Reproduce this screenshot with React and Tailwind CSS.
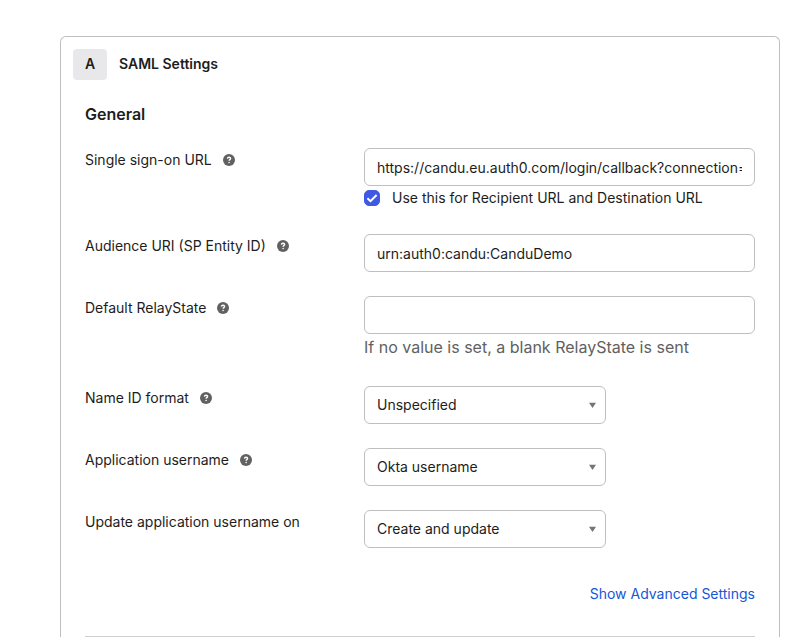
import React, { useState } from 'react';

const usernameFormats = ['Okta username', 'Email', 'Custom', '(None)'];
const nameIdFormats = ['Unspecified', 'EmailAddress', 'x509SubjectName', 'Persistent', 'Transient'];
const updateOptions = ['Create and update', 'Create only'];

// Small round help marker shown after a label
const HelpIcon = () => (
  <svg className="w-3 h-3 ml-[11px] shrink-0" viewBox="0 0 12 12" aria-hidden="true">
    <circle cx="6" cy="6" r="6" fill="#616161" />
    <path
      d="M4.4 4.6c.1-.9.7-1.3 1.6-1.3s1.6.5 1.6 1.3c0 1-1.5 1-1.5 2.2"
      fill="none"
      stroke="#fff"
      strokeWidth="1.4"
    />
    <circle cx="6.1" cy="8.5" r="0.8" fill="#fff" />
  </svg>
);

// One label / control row of the form
const Field = ({ id, label, help, children }) => (
  <div className="flex mb-6">
    <div className="w-[279px] shrink-0 pt-0.5">
      <label htmlFor={id} className="flex items-center leading-5">
        {label}
        {help && <HelpIcon />}
      </label>
    </div>
    <div className="flex-1 min-w-0">{children}</div>
  </div>
);

const TextInput = ({ id, defaultValue }) => (
  <input
    id={id}
    type="text"
    defaultValue={defaultValue}
    className="block w-full h-[38px] px-3 border border-[#bfbfbf] rounded-md bg-white
             focus:outline-none focus:border-[#3f59e4]"
  />
);

const Select = ({ id, options }) => (
  <div className="relative w-[242px]">
    <select
      id={id}
      className="block w-full h-[38px] pl-3 pr-8 appearance-none border border-[#bfbfbf] rounded-md bg-white
               focus:outline-none focus:border-[#3f59e4]"
    >
      {options.map((option) => (
        <option key={option}>{option}</option>
      ))}
    </select>
    <svg
      className="absolute right-2.5 top-4 w-[7px] h-1.5 pointer-events-none"
      viewBox="0 0 7 6"
      aria-hidden="true"
    >
      <path d="M0 .8h7L3.5 6z" fill="#757575" />
    </svg>
  </div>
);

const App = () => {
  const [useForRecipient, setUseForRecipient] = useState(true);

  return (
    <div className="min-h-screen flex flex-col bg-white pt-9 pl-[60px] pr-[23px] font-['Inter',sans-serif] text-sm text-[#1d1d21]">
      <section className="flex-1 border border-b-0 border-[#bfbfbf] rounded-t-md">
        {/* Step header */}
        <header className="flex items-start px-3 pt-3 leading-[29px] font-semibold">
          <span className="w-[34px] h-[31px] rounded bg-[#e8e8ea] text-center">A</span>
          <h1 className="ml-3">SAML Settings</h1>
        </header>

        <form className="px-6 pt-[22px]" onSubmit={(e) => e.preventDefault()}>
          <h2 className="mb-[22px] text-base leading-6 font-semibold">General</h2>

          <Field id="sso-url" label="Single sign-on URL" help>
            <TextInput
              id="sso-url"
              defaultValue="https://candu.eu.auth0.com/login/callback?connection=CanduDemo"
            />
            <label className="flex items-center h-6">
              <span className="relative w-4 h-4">
                <input
                  type="checkbox"
                  checked={useForRecipient}
                  onChange={(e) => setUseForRecipient(e.target.checked)}
                  className="block w-4 h-4 appearance-none rounded-[5px] border border-[#8c8c96] checked:border-[#3f59e4] checked:bg-[#3f59e4]"
                />
                {useForRecipient && (
                  <svg className="absolute inset-0 w-4 h-4 pointer-events-none" viewBox="0 0 16 16" aria-hidden="true">
                    <path d="M3.4 8.2l3.1 3L12.6 5" fill="none" stroke="#fff" strokeWidth="2" />
                  </svg>
                )}
              </span>
              <span className="ml-3">Use this for Recipient URL and Destination URL</span>
            </label>
          </Field>

          <Field id="audience-uri" label="Audience URI (SP Entity ID)" help>
            <TextInput id="audience-uri" defaultValue="urn:auth0:candu:CanduDemo" />
          </Field>

          <Field id="relay-state" label="Default RelayState" help>
            <TextInput id="relay-state" />
            <p className="pb-0.5 text-base leading-[26px] text-[#616161]">
              If no value is set, a blank RelayState is sent
            </p>
          </Field>

          <Field id="name-id" label="Name ID format" help>
            <Select id="name-id" options={nameIdFormats} />
          </Field>

          <Field id="app-username" label="Application username" help>
            <Select id="app-username" options={usernameFormats} />
          </Field>

          <Field id="update-on" label="Update application username on">
            <Select id="update-on" options={updateOptions} />
          </Field>

          <div className="flex justify-end pt-2.5 pb-[30px] leading-6">
            <a href="#" className="text-[#1557d8] hover:underline">
              Show Advanced Settings
            </a>
          </div>

          <hr className="border-[#cfcfd3]" />
        </form>
      </section>
    </div>
  );
};

export default App;
